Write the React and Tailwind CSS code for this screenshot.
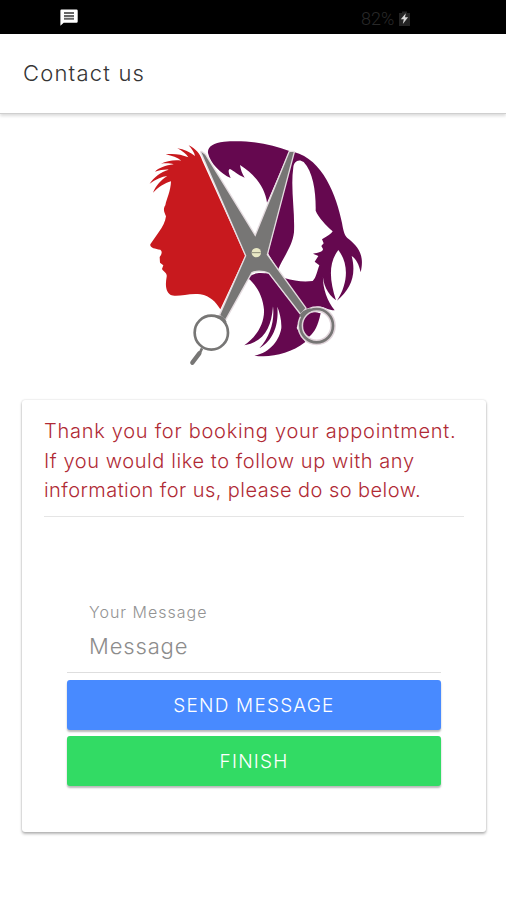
function StatusBar() {
  return (
    <div className="flex h-[34px] items-center bg-black pl-[60px]">
      <svg className="mt-px h-[17px] w-[18px]" viewBox="0 0 18 17">
        <path d="M1.5 .5h15q1.2 0 1.2 1.2v10.8q0 1.2-1.2 1.2H3.7L.4 16.7V1.7Q.4.5 1.5.5Z" fill="#fff" />
        <path d="M4 4.1h10M4 6.9h10M4 9.7h10" stroke="#666" strokeWidth="2" />
      </svg>
      <span className="ml-[283px] mt-1 font-['Roboto',sans-serif] text-[18px] font-light leading-none text-[#292929]">82%</span>
      <svg className="ml-1 mt-0.5 h-[17px] w-[13px]" viewBox="0 0 13 17">
        <path d="M4 1.5h5V3h3v13H1V3h3Z" fill="#242424" />
        <path d="M7.8 3.2 2.8 9.3h3L4.8 14l5.3-6.7H7Z" fill="#d8d8d8" />
      </svg>
    </div>
  );
}

function Logo() {
  return (
    <svg className="h-60 w-60" viewBox="0 0 720 720" role="img" aria-label="Hair salon">
      {/* man's profile */}
      <path
        fill="#c8191e"
        d="M187 92C181 72 166 55 146 46C156 57 163 68 165 78C150 66 132 58 112 55C127 63 139 72 145 82C124 73 101 70 77 73C96 77 113 83 124 92C102 89 80 93 63 101C78 99 92 100 101 103C77 106 55 114 45 125C60 120 75 118 86 119C62 126 41 142 29 161C46 148 66 140 82 138C63 149 47 168 39 188C55 172 74 159 93 154C92 184 80 205 76 226C68 238 73 247 78 259C76 276 68 290 56 307L31 343C29 353 45 356 61 359C68 365 65 373 59 381L60 398L70 406L66 417C71 426 82 428 80 440C76 462 76 485 91 494C110 504 145 488 181 493C211 498 228 517 241 538L316 377Z"
      />
      {/* woman's hair */}
      <g fill="#65084f">
        <path d="M204 69C202 50 220 38 252 35C324 29 394 42 448 63L381 218C376 178 350 137 300 105C302 119 306 130 314 143C294 135 281 122 270 117C263 119 266 130 272 144C243 132 211 100 204 69Z" />
        <path d="M462 66C548 88 590 197 606 279C610 302 613 315 622 324C639 338 660 353 665 386C667 400 665 414 662 427C657 404 649 387 635 378C650 435 632 477 591 512C628 454 624 397 595 360C564 400 569 452 588 511C557 489 543 448 550 412C544 466 558 508 584 541C564 541 548 526 530 530L485 539L433 444C464 454 493 456 518 453C529 443 531 424 538 406L524 395L535 378L519 371C535 368 549 366 549 357L544 348L551 340L546 328C559 321 574 311 578 304C557 285 536 263 527 242C528 188 520 127 491 96C475 84 461 96 460 112C451 174 465 241 462 307C457 350 431 379 414 419L384 370Z" />
        <path d="M324 445C344 423 366 430 386 430L440 500L485 550L470 594L496 636C449 672 395 683 343 677C392 668 419 628 424 594C425 570 419 548 412 530C416 574 406 628 358 655C391 619 404 573 399 529C394 596 371 635 313 646C349 621 374 581 372 539C369 501 351 466 324 445Z" />
        <path d="M491 560C508 542 527 546 542 550C535 584 524 608 507 620C484 609 481 580 491 560Z" />
      </g>
      {/* scissors: pale edge first, steel on top */}
      <ellipse cx="530" cy="587" rx="49" ry="50" fill="none" stroke="#e0d4da" strokeWidth="17" />
      <path
        fill="#777675"
        stroke="#e5dce0"
        strokeWidth="8"
        strokeLinejoin="round"
        paintOrder="stroke"
        d="M184 66L195 74L265 188L346 320L405 175L449 66L461 66L380 374L496 535L482 550L388 428C371 421 348 419 334 427L256 567L241 555L319 377Z"
      />
      <g fill="none" stroke="#777675">
        <ellipse cx="214" cy="608" rx="50" ry="51" strokeWidth="8" />
        <path d="M186 655L178 672" strokeWidth="8" />
        <path d="M178 670L157 698" strokeWidth="13" strokeLinecap="round" />
        <ellipse cx="530" cy="587" rx="49" ry="50" strokeWidth="8" />
        <path d="M232 560Q250 560 256 578M482 560Q487 545 512 539" strokeWidth="9" />
      </g>
      <circle cx="349" cy="368" r="14" fill="#e9e8c5" />
      <path d="M336 368h26" stroke="#8c8b78" strokeWidth="3" />
    </svg>
  );
}

export default function App() {
  return (
    <main className="h-[900px] w-[506px] overflow-hidden bg-white font-['Inter',sans-serif]">
      <StatusBar />
      <header className="flex h-[80px] items-center border-b border-[#cfcfcf] pl-[23px] shadow-[0_2px_3px_rgba(0,0,0,0.14)]">
        <h1 className="whitespace-nowrap text-[22px] font-light tracking-[1.2px] text-[#353535]">Contact us</h1>
      </header>

      <div className="flex h-[286px] pl-[140px] pt-4">
        <Logo />
      </div>

      <section className="ml-[22px] h-[432px] w-[464px] rounded-[3px] bg-white px-[22px] pt-[17px] shadow-[0_2px_3px_rgba(0,0,0,0.28),0_0_2px_rgba(0,0,0,0.18)]">
        <p className="h-[100px] whitespace-nowrap border-b border-[#e5e5e5] text-[20px] font-light leading-[29.5px] text-[#b02a35]">
          <span className="block tracking-[0.73px]">Thank you for booking your appointment.</span>
          <span className="block tracking-[0.58px]">If you would like to follow up with any</span>
          <span className="block tracking-[0.45px]">information for us, please do so below.</span>
        </p>

        <form className="mx-[23px] pt-[83px]">
          <div className="h-[73px] border-b border-[#dedede] pl-[22px]">
            <label className="block text-[16px] font-light leading-6 tracking-[1px] text-[#939393]" htmlFor="message">
              Your Message
            </label>
            <input
              id="message"
              className="mt-1.5 block h-8 w-full bg-transparent text-[22px] font-light leading-8 tracking-[0.85px] outline-none placeholder:text-[#8c8c8c]"
              placeholder="Message"
            />
          </div>
          <button type="button" className="mt-[7px] block h-[50px] w-full rounded-[3px] bg-[#488aff] pt-0.5 text-[19px] font-light tracking-[1.2px] text-white shadow-[0_2px_2px_rgba(0,0,0,0.28)]">
            SEND MESSAGE
          </button>
          <button type="button" className="mt-1.5 block h-[50px] w-full rounded-[3px] bg-[#32db64] pt-0.5 text-[19px] font-light tracking-[1.2px] text-white shadow-[0_2px_2px_rgba(0,0,0,0.28)]">
            FINISH
          </button>
        </form>
      </section>
    </main>
  );
}
